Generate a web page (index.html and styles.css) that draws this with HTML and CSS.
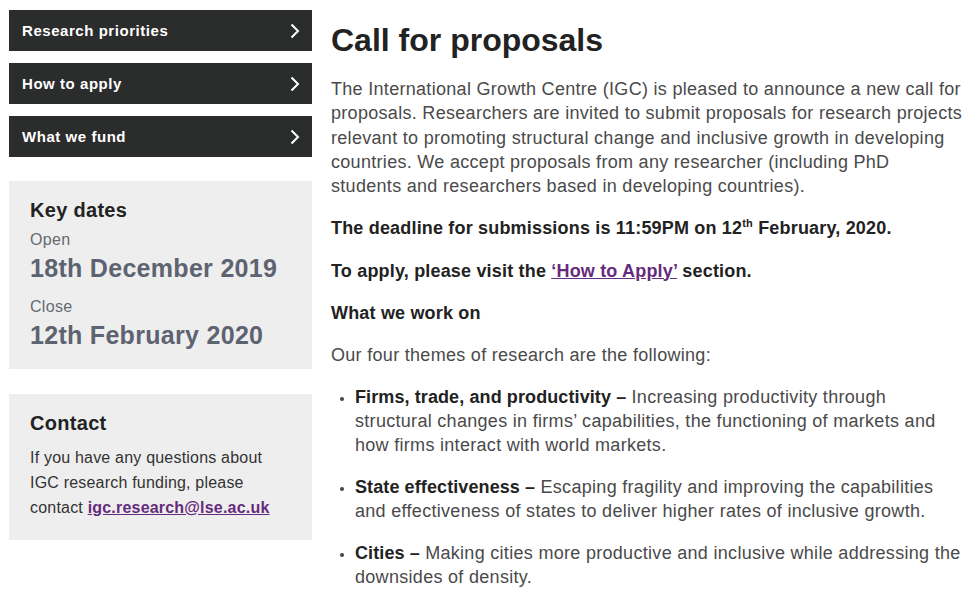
FILE: index.html
```html
<!DOCTYPE html>
<html lang="en">
<head>
<meta charset="utf-8">
<title>Call for proposals</title>
<link rel="stylesheet" href="styles.css">
</head>
<body>
<div class="page">
  <aside class="sidebar">
    <nav class="nav">
      <a class="nav-item" href="#">Research priorities<svg class="chev" viewBox="0 0 10 16" width="10" height="16"><path d="M1.5 1.5 L8 8 L1.5 14.5" fill="none" stroke="#fff" stroke-width="2"/></svg></a>
      <a class="nav-item" href="#">How to apply<svg class="chev" viewBox="0 0 10 16" width="10" height="16"><path d="M1.5 1.5 L8 8 L1.5 14.5" fill="none" stroke="#fff" stroke-width="2"/></svg></a>
      <a class="nav-item" href="#">What we fund<svg class="chev" viewBox="0 0 10 16" width="10" height="16"><path d="M1.5 1.5 L8 8 L1.5 14.5" fill="none" stroke="#fff" stroke-width="2"/></svg></a>
    </nav>
    <section class="box dates">
      <h3 class="box-title">Key dates</h3>
      <div class="label">Open</div>
      <div class="date">18th December 2019</div>
      <div class="label label-close">Close</div>
      <div class="date">12th February 2020</div>
    </section>
    <section class="box contact">
      <h3 class="box-title">Contact</h3>
      <p class="contact-text">If you have any questions about IGC research funding, please contact <a class="link" href="#">igc.research@lse.ac.uk</a></p>
    </section>
  </aside>
  <main class="main">
    <h1 class="title">Call for proposals</h1>
    <p class="text">The International Growth Centre (IGC) is pleased to announce a new call for proposals. Researchers are invited to submit proposals for research projects relevant to promoting structural change and inclusive growth in developing countries. We accept proposals from any researcher (including PhD students and researchers based in developing countries).</p>
    <p class="text strong">The deadline for submissions is 11:59PM on 12<sup>th</sup> February, 2020.</p>
    <p class="text strong">To apply, please visit the <a class="link" href="#">‘How to Apply’</a> section.</p>
    <p class="text strong">What we work on</p>
    <p class="text">Our four themes of research are the following:</p>
    <ul class="themes">
      <li><b>Firms, trade, and productivity –</b> Increasing productivity through structural changes in firms’ capabilities, the functioning of markets and how firms interact with world markets.</li>
      <li><b>State effectiveness –</b> Escaping fragility and improving the capabilities and effectiveness of states to deliver higher rates of inclusive growth.</li>
      <li><b>Cities –</b> Making cities more productive and inclusive while addressing the downsides of density.</li>
    </ul>
  </main>
</div>
</body>
</html>
```

FILE: styles.css
```css
* { box-sizing: border-box; }
html, body { margin: 0; padding: 0; background: #fff; }
body {
  font-family: "Liberation Sans", Arial, sans-serif;
  color: #4a4a4a;
  overflow: hidden;
}
.page {
  display: flex;
  align-items: flex-start;
  gap: 19px;
  padding: 10px 0 0 9px;
}
.sidebar {
  width: 303px;
  flex: none;
  display: flex;
  flex-direction: column;
}
.nav {
  display: flex;
  flex-direction: column;
  gap: 12px;
}
.nav-item {
  display: flex;
  align-items: center;
  justify-content: space-between;
  height: 41px;
  padding: 0 12px 0 13px;
  background: #2b2c2c;
  color: #fff;
  text-decoration: none;
  font-weight: bold;
  font-size: 15px;
  letter-spacing: 0.55px;
}
.chev { display: block; }
.box {
  background: #eeeeee;
  padding: 17px 21px 19px;
}
.dates { margin-top: 24px; }
.contact { margin-top: 25px; padding-bottom: 20px; }
.box-title {
  margin: 0;
  font-size: 20px;
  line-height: 24px;
  font-weight: bold;
  color: #222;
  letter-spacing: 0.3px;
}
.label {
  margin-top: 8px;
  font-size: 16px;
  line-height: 20px;
  color: #666a70;
  letter-spacing: 0.3px;
}
.label-close { margin-top: 14px; }
.date {
  margin-top: 3px;
  font-size: 25px;
  line-height: 30px;
  font-weight: bold;
  color: #5d6370;
  letter-spacing: 0.3px;
}
.contact-text {
  margin: 10px 0 0;
  font-size: 16px;
  line-height: 25px;
  color: #333;
  letter-spacing: 0.2px;
}
.link {
  color: #652b7c;
  font-weight: bold;
  text-decoration: underline;
}
.main {
  width: 632px;
  flex: none;
  padding-top: 11px;
}
.title {
  margin: 0 0 18px;
  font-size: 32px;
  line-height: 38px;
  font-weight: bold;
  color: #222;
}
.text {
  margin: 0 0 18px;
  font-size: 18px;
  line-height: 24.25px;
  letter-spacing: 0.3px;
}
.strong {
  font-weight: bold;
  color: #222;
  letter-spacing: 0.18px;
}
.strong sup { font-size: 11px; line-height: 0; }
.themes {
  margin: 0;
  padding: 0 0 0 24px;
  font-size: 18px;
  line-height: 24px;
  letter-spacing: 0.3px;
}
.themes li { margin-bottom: 18px; }
.themes li::marker { color: #444; font-size: 14px; }
.themes b { color: #222; letter-spacing: 0.1px; }
```
